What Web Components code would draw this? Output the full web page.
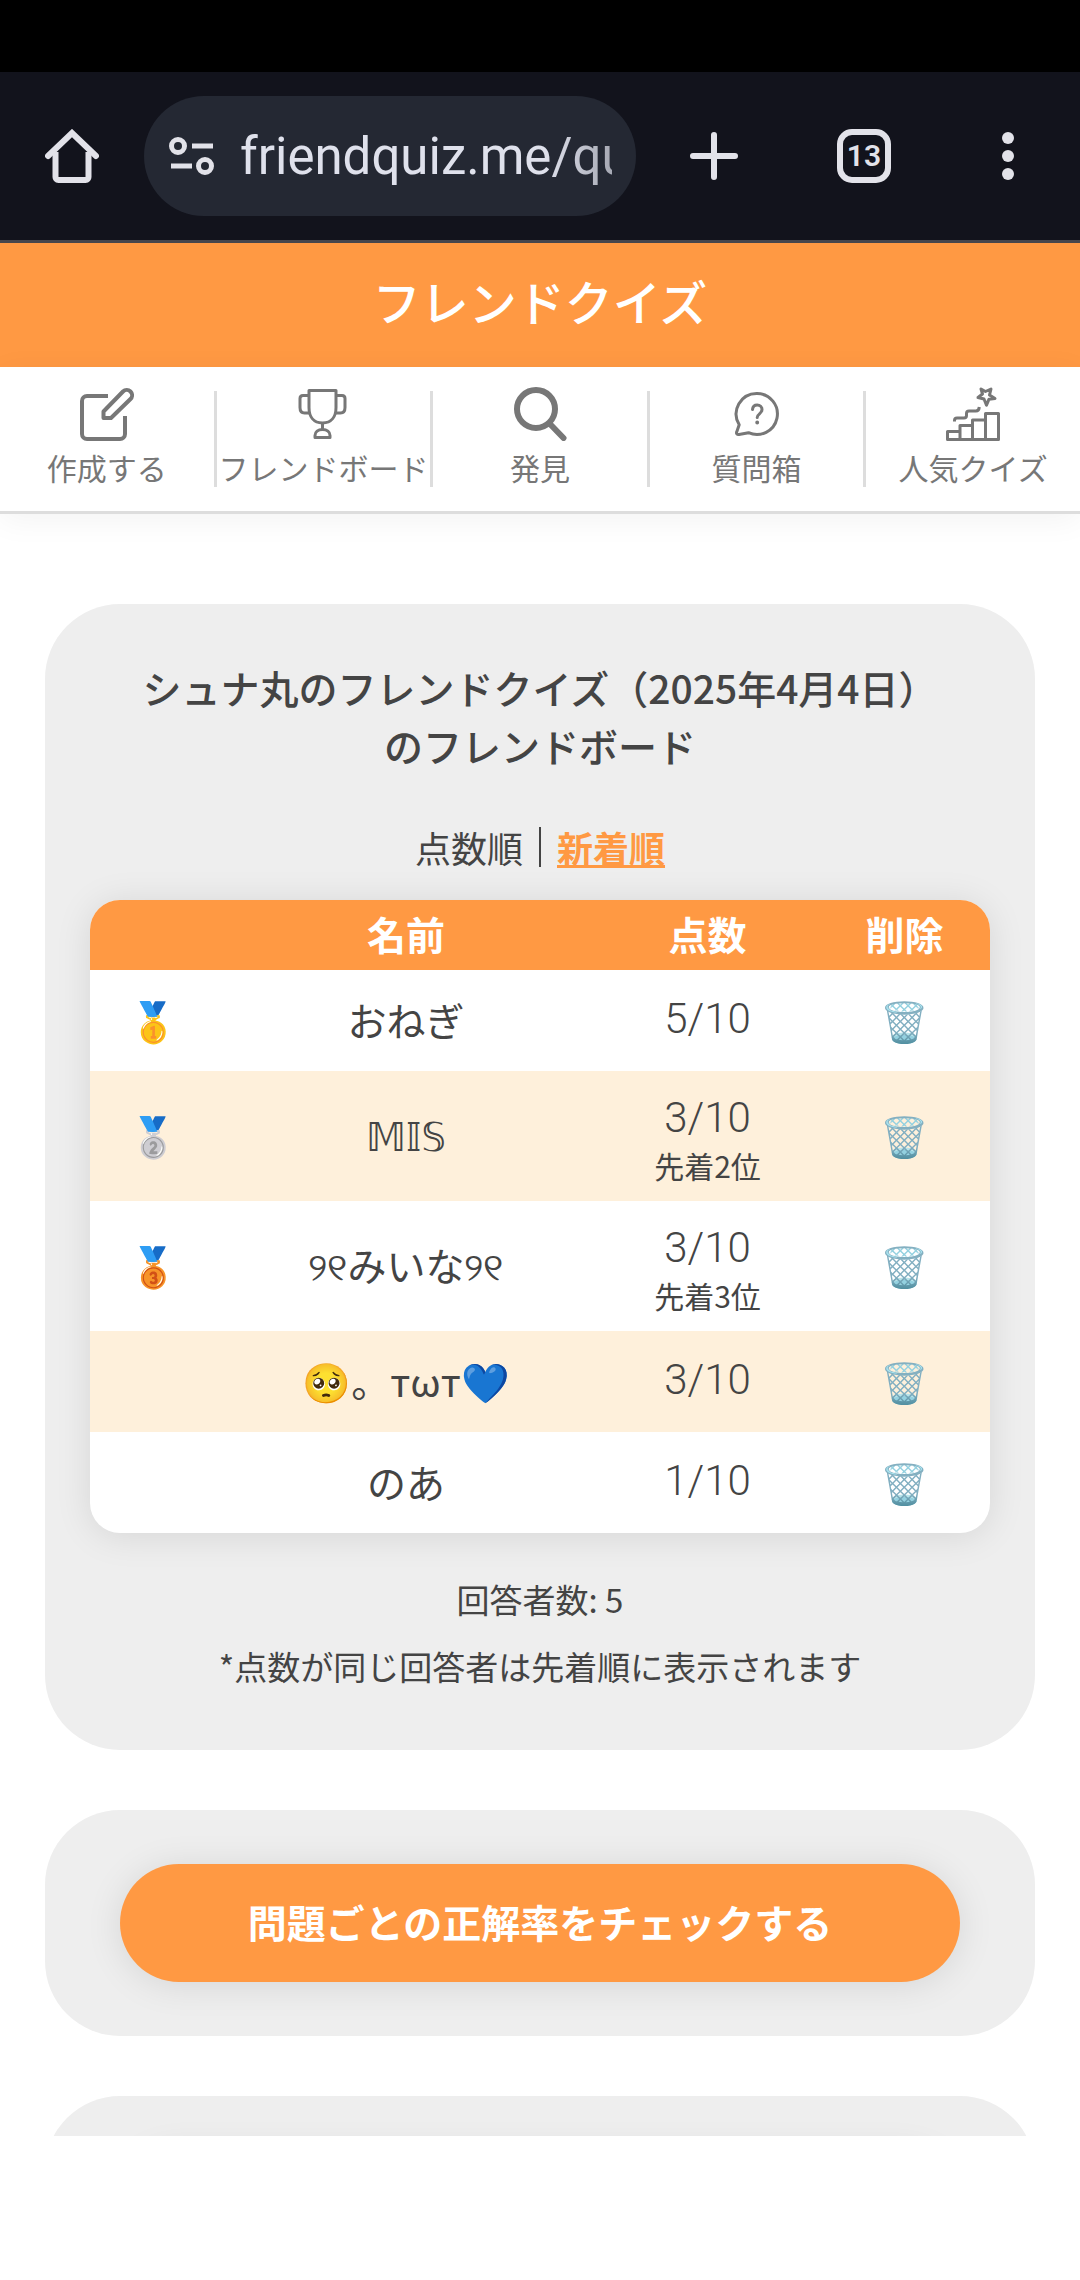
<!DOCTYPE html>
<html lang="ja">
<head>
<meta charset="utf-8">
<meta name="viewport" content="width=device-width, initial-scale=1">
<title>フレンドクイズ</title>
<style>
  :root {
    --accent: #ff9943;
    --stripe: #fef0db;
    --card: #eeeeee;
    --text: #444444;
    --muted: #777777;
    --line: #dddddd;
    --shadow: 0 3px 36px rgba(0, 0, 0, 0.1);
  }
  body {
    margin: 0;
    height: 100vh;
    display: flex;
    flex-direction: column;
    background: #ffffff;
    color: var(--text);
    font-family: "Noto Sans CJK JP", "DejaVu Sans", sans-serif;
    font-size: 39px;
  }
  main {
    flex: 1;
    min-height: 0;
    overflow: hidden;
    margin-bottom: 144px;
    padding: 90px 45px 0;
    display: flex;
    flex-direction: column;
    gap: 60px;
  }
</style>
</head>
<body>
  <browser-bar url="friendquiz.me/qu" tabs="13"></browser-bar>
  <site-header>フレンドクイズ</site-header>
  <site-nav>
    <nav-item icon="edit">作成する</nav-item>
    <nav-item icon="trophy">フレンドボード</nav-item>
    <nav-item icon="search">発見</nav-item>
    <nav-item icon="question">質問箱</nav-item>
    <nav-item icon="stairs">人気クイズ</nav-item>
  </site-nav>
  <main>
    <quiz-card>
      <friend-board>
        <span slot="title">シュナ丸のフレンドクイズ（2025年4月4日）のフレンドボード</span>
      </friend-board>
    </quiz-card>
    <quiz-card>
      <pill-button>問題ごとの正解率をチェックする</pill-button>
    </quiz-card>
    <quiz-card>
      <pill-button></pill-button>
    </quiz-card>
  </main>

<script>
"use strict";

////////////////////////////////////////////
// Constants
const ICON_SIZE = 54;

const ICONS = {
  edit: `<g fill="none" stroke="currentColor" stroke-width="4" stroke-linecap="butt" stroke-linejoin="round">
      <path d="M28 9H7a5 5 0 0 0-5 5v33a5 5 0 0 0 5 5h33a5 5 0 0 0 5-5V29" />
      <path d="M23.500 31v-6.500L43 4.500a5.300 5.300 0 0 1 7.500 7.500L31 31z" />
    </g>`,
  trophy: `<g fill="none" stroke="currentColor" stroke-width="3" stroke-linejoin="round">
      <path d="M13 3.500h27v17c0 9-4.500 15.500-13.500 15.500s-13.500-6.500-13.500-15.500z" />
      <path d="M12.500 8.500H7c-2 0-3 1-3 3v9c0 4 2 5.500 4.500 5.500H14M40.500 8.500H46c2 0 3 1 3 3v9c0 4-2 5.500-4.500 5.500H39" />
      <path d="M26.500 36v7M19 50.500h15v-2c0-3.500-3-6-7.500-6s-7.500 2.500-7.500 6z" />
    </g>`,
  search: `<g fill="none" stroke="currentColor">
      <circle cx="23" cy="22" r="19" stroke-width="6" />
      <path d="M37 37l13.500 14" stroke-width="6" stroke-linecap="round" />
    </g>`,
  question: `<g fill="none" stroke="currentColor" stroke-width="3" stroke-linecap="round" stroke-linejoin="round">
      <path d="M27 6.500a20.500 20.500 0 1 1-8.500 39.200l-9.500 1.800c-2 .3-3-1-2.200-2.800l2.400-7A20.500 20.500 0 0 1 27 6.500z" />
      <path d="M22.500 22.500c.3-3 2.200-4.500 4.700-4.500 2.800 0 4.800 2 4.800 4.600 0 4.400-4.800 4-4.800 8" />
      <circle cx="27.200" cy="35.500" r="1.200" fill="currentColor" stroke-width="1.500" />
    </g>`,
  stairs: `<g fill="none" stroke="currentColor" stroke-width="3" stroke-linejoin="round">
      <path d="M1.500 52.500v-8h12.500v8zM14 52.500v-14h12.500v14zM26.500 52.500v-19.500h13v19.500zM39.500 52.500v-26h13v26z" />
      <path d="M8.500 34.500v-1c0-1.500 1-2.500 2.500-2.500h7c1.500 0 2.500-1 2.500-2.500v-2c0-1.500 1-2.500 2.500-2.500h7c2 0 3-1 3.300-4" />
      <path d="M35 2l4.500 2.500L45 2l-1.500 6 5.500 3.500-6 .7-2.500 6-2.500-6.200-6-1.500 4.500-3.500z" />
    </g>`,
};

const PLAYERS = [
  { medal: "🥇", name: "おねぎ", score: "5/10", note: "" },
  { medal: "🥈", name: "𝕄𝕀𝕊", score: "3/10", note: "先着2位" },
  { medal: "🥉", name: "୨୧みいな୨୧", score: "3/10", note: "先着3位" },
  { medal: "", name: "🥺。тωт💙", score: "3/10", note: "" },
  { medal: "", name: "のあ", score: "1/10", note: "" },
];

////////////////////////////////////////////
// Browser toolbar
class BrowserBar extends HTMLElement {
  constructor() {
    super();
    this._root = this.attachShadow({ mode: "open" });
    this.render();
  }

  render() {
    this._root.innerHTML = `
      <style>
        :host {
          display: block;
          padding-top: 72px;
          background: #000000;
          color: #e2e2e9;
          font-family: Roboto, sans-serif;
        }
        .bar {
          display: flex;
          align-items: center;
          height: 168px;
          background: #12131c;
          border-bottom: 3px solid #47464c;
        }
        button {
          flex: none;
          display: grid;
          place-items: center;
          width: 144px;
          height: 144px;
          padding: 0;
          border: 0;
          background: none;
          color: inherit;
        }
        .add { width: 156px; }
        .address {
          flex: 1;
          min-width: 0;
          height: 120px;
          box-sizing: border-box;
          display: flex;
          align-items: center;
          gap: 24px;
          padding: 0 24px;
          border-radius: 60px;
          background: #242833;
        }
        .address svg { flex: none; }
        input {
          flex: 1;
          min-width: 0;
          padding: 2px 0 0;
          border: 0;
          outline: 0;
          background: none;
          color: #dfe1ec;
          font: 400 51px/72px Roboto, sans-serif;
          -webkit-mask-image: linear-gradient(to right, #000 82%, rgba(0, 0, 0, 0.7));
          mask-image: linear-gradient(to right, #000 82%, rgba(0, 0, 0, 0.7));
        }
        .tabs span {
          display: grid;
          place-items: center;
          width: 54px;
          height: 54px;
          box-sizing: border-box;
          border: 6px solid;
          border-radius: 15px;
          font: 600 30px/36px Roboto, sans-serif;
        }
      </style>
      <div class="bar">
        <button type="button" aria-label="ホーム">
          <svg width="54" height="54" viewBox="0 0 54 54" fill="none" stroke="currentColor" stroke-width="6" stroke-linejoin="round">
            <path d="M10.500 23v25c0 1.500 1 3 3 3h27c2 0 3-1.500 3-3V23" />
            <path d="M3 27L27 4l24 23" stroke-linecap="round" stroke-linejoin="miter" />
          </svg>
        </button>
        <label class="address">
          <svg width="48" height="48" viewBox="0 0 48 48" fill="none" stroke="currentColor" stroke-width="5">
            <circle cx="10" cy="14" r="6.500" /><path d="M24 14h21M3 34h21" />
            <circle cx="37" cy="34" r="6.500" />
          </svg>
          <input type="text" aria-label="アドレス" value="${this.getAttribute("url")}">
        </label>
        <button type="button" class="add" aria-label="新しいタブ">
          <svg width="54" height="54" viewBox="0 0 54 54" stroke="currentColor" stroke-width="6" stroke-linecap="round">
            <path d="M6 27h42M27 6v42" />
          </svg>
        </button>
        <button type="button" class="tabs"><span>${this.getAttribute("tabs")}</span></button>
        <button type="button" aria-label="メニュー">
          <svg width="54" height="54" viewBox="0 0 54 54" fill="currentColor">
            <circle cx="27" cy="9" r="6" /><circle cx="27" cy="27" r="6" /><circle cx="27" cy="45" r="6" />
          </svg>
        </button>
      </div>
    `;
  }
}

////////////////////////////////////////////
// Orange site header
class SiteHeader extends HTMLElement {
  constructor() {
    super();
    this.attachShadow({ mode: "open" }).innerHTML = `
      <style>
        :host {
          display: block;
          background: var(--accent);
          color: #ffffff;
          text-align: center;
        }
        h1 {
          margin: 0;
          padding: 21px 0 31px;
          font-size: 48px;
          font-weight: 500;
          line-height: 72px;
        }
      </style>
      <h1><slot></slot></h1>
    `;
  }
}

////////////////////////////////////////////
// Navigation
class SiteNav extends HTMLElement {
  constructor() {
    super();
    this.attachShadow({ mode: "open" }).innerHTML = `
      <style>
        :host { display: block; }
        nav {
          display: flex;
          background: #ffffff;
          border-bottom: 3px solid var(--line);
          box-shadow: 0 6px 30px rgba(0, 0, 0, 0.05);
        }
      </style>
      <nav><slot></slot></nav>
    `;
  }
}

class NavItem extends HTMLElement {
  constructor() {
    super();
    this._icon = ICONS[this.getAttribute("icon")] ?? "";
    this.attachShadow({ mode: "open" }).innerHTML = `
      <style>
        :host {
          flex: 1 1 0;
          min-width: 0;
          display: block;
          padding-right: 3px;
          background: linear-gradient(var(--line), var(--line)) right 24px / 3px 96px no-repeat;
        }
        :host(:last-child) {
          padding-right: 0;
          background: none;
        }
        a {
          display: flex;
          flex-direction: column;
          align-items: center;
          gap: 6px;
          padding: 20px 0 24px;
          color: var(--muted);
          font-size: 30px;
          font-weight: 400;
          line-height: 40px;
          text-decoration: none;
          white-space: nowrap;
        }
      </style>
      <a href="#">
        <svg width="${ICON_SIZE}" height="${ICON_SIZE}" viewBox="0 0 54 54" aria-hidden="true">${this._icon}</svg>
        <slot></slot>
      </a>
    `;
  }
}

////////////////////////////////////////////
// Cards and buttons
class QuizCard extends HTMLElement {
  constructor() {
    super();
    this.attachShadow({ mode: "open" }).innerHTML = `
      <style>
        :host {
          flex: none;
          display: block;
          padding: 54px 45px;
          border-radius: 75px;
          background: var(--card);
        }
      </style>
      <slot></slot>
    `;
  }
}

class PillButton extends HTMLElement {
  constructor() {
    super();
    this.attachShadow({ mode: "open" }).innerHTML = `
      <style>
        :host {
          display: block;
          padding: 0 30px;
        }
        button {
          display: block;
          width: 100%;
          min-height: 118px;
          padding: 28px 0 32px;
          border: 0;
          border-radius: 60px;
          background: var(--accent);
          box-shadow: var(--shadow);
          color: #ffffff;
          font: inherit;
          font-weight: 700;
          line-height: 58px;
        }
      </style>
      <button type="button"><slot></slot></button>
    `;
  }
}

////////////////////////////////////////////
// Ranking table
class FriendBoard extends HTMLElement {
  constructor() {
    super();
    this._root = this.attachShadow({ mode: "open" });
    this.render();
  }

  /**
   * Builds one table row for a player.
   */
  row({ medal, name, score, note }) {
    return `
      <tr>
        <td>${medal}</td>
        <td>${name}</td>
        <td class="points"><span>${score}</span>${note && `<small>${note}</small>`}</td>
        <td><button type="button" aria-label="削除">🗑️</button></td>
      </tr>`;
  }

  render() {
    this._root.innerHTML = `
      <style>
        :host {
          display: block;
          text-align: center;
        }
        h2 {
          margin: 0 45px 48px;
          font-size: 39px;
          font-weight: 500;
          line-height: 58px;
        }
        .sort {
          display: flex;
          justify-content: center;
          align-items: center;
          gap: 16px;
          margin-bottom: 28px;
          font-size: 36px;
          line-height: 50px;
        }
        .sort i {
          width: 2px;
          height: 40px;
          background: var(--text);
        }
        .sort a {
          color: var(--accent);
          font-weight: 700;
        }
        table {
          width: 100%;
          table-layout: fixed;
          border-collapse: collapse;
          border-radius: 30px;
          overflow: hidden;
          background: #ffffff;
          box-shadow: var(--shadow);
        }
        .rank { width: 126px; }
        .score { width: 223px; }
        .delete { width: 171px; }
        th {
          height: 66px;
          padding: 0 0 4px;
          background: var(--accent);
          color: #ffffff;
          font-weight: 700;
          line-height: 58px;
        }
        td {
          height: 97px;
          padding: 0 0 4px;
          line-height: 58px;
        }
        tbody tr:nth-child(even) { background: var(--stripe); }
        .points span {
          display: block;
          font-family: Roboto, sans-serif;
          font-size: 42px;
          font-weight: 300;
          line-height: 50px;
        }
        .points small {
          display: block;
          font-size: 30px;
          line-height: 44px;
        }
        .points:has(small) {
          height: 94px;
          padding: 22px 0 14px;
        }
        td button {
          padding: 0;
          border: 0;
          background: none;
          font: inherit;
        }
        p {
          margin: 0;
          font-size: 33px;
          line-height: 48px;
        }
        .notes {
          display: grid;
          gap: 19px;
          padding: 42px 0 6px;
        }
      </style>
      <h2><slot name="title"></slot></h2>
      <div class="sort"><span>点数順</span><i></i><a href="#">新着順</a></div>
      <table>
        <thead>
          <tr>
            <th class="rank"></th>
            <th>名前</th>
            <th class="score">点数</th>
            <th class="delete">削除</th>
          </tr>
        </thead>
        <tbody>${PLAYERS.map((player) => this.row(player)).join("")}</tbody>
      </table>
      <div class="notes">
        <p>回答者数: ${PLAYERS.length}</p>
        <p>*点数が同じ回答者は先着順に表示されます</p>
      </div>
    `;
  }
}

////////////////////////////////////////////
// Executed Code
window.customElements.define("browser-bar", BrowserBar);
window.customElements.define("site-header", SiteHeader);
window.customElements.define("site-nav", SiteNav);
window.customElements.define("nav-item", NavItem);
window.customElements.define("quiz-card", QuizCard);
window.customElements.define("pill-button", PillButton);
window.customElements.define("friend-board", FriendBoard);
</script>
</body>
</html>
